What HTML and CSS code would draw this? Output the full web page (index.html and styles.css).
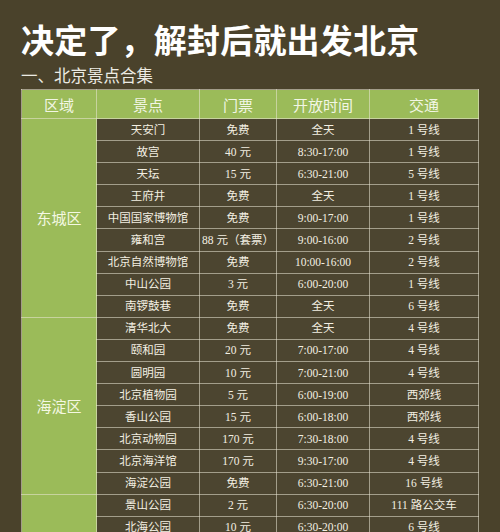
FILE: index.html
```html
<!DOCTYPE html>
<html lang="zh-CN">
<head>
<meta charset="utf-8">
<title>决定了，解封后就出发北京</title>
<link rel="stylesheet" href="styles.css">
</head>
<body>
<div class="page">
  <h1 class="title">决定了，解封后就出发北京</h1>
  <h2 class="subtitle">一、北京景点合集</h2>
  <table class="spots">
    <colgroup>
      <col class="c-area"><col class="c-spot"><col class="c-ticket"><col class="c-time"><col class="c-traffic">
    </colgroup>
    <thead>
      <tr><th>区域</th><th>景点</th><th>门票</th><th>开放时间</th><th>交通</th></tr>
    </thead>
    <tbody>
      <tr><td class="area" rowspan="9">东城区</td><td>天安门</td><td>免费</td><td>全天</td><td>1 号线</td></tr>
      <tr><td>故宫</td><td>40 元</td><td>8:30-17:00</td><td>1 号线</td></tr>
      <tr><td>天坛</td><td>15 元</td><td>6:30-21:00</td><td>5 号线</td></tr>
      <tr><td>王府井</td><td>免费</td><td>全天</td><td>1 号线</td></tr>
      <tr><td>中国国家博物馆</td><td>免费</td><td>9:00-17:00</td><td>1 号线</td></tr>
      <tr><td>雍和宫</td><td>88 元（套票）</td><td>9:00-16:00</td><td>2 号线</td></tr>
      <tr><td>北京自然博物馆</td><td>免费</td><td>10:00-16:00</td><td>2 号线</td></tr>
      <tr><td>中山公园</td><td>3 元</td><td>6:00-20:00</td><td>1 号线</td></tr>
      <tr><td>南锣鼓巷</td><td>免费</td><td>全天</td><td>6 号线</td></tr>
      <tr><td class="area" rowspan="8">海淀区</td><td>清华北大</td><td>免费</td><td>全天</td><td>4 号线</td></tr>
      <tr><td>颐和园</td><td>20 元</td><td>7:00-17:00</td><td>4 号线</td></tr>
      <tr><td>圆明园</td><td>10 元</td><td>7:00-21:00</td><td>4 号线</td></tr>
      <tr><td>北京植物园</td><td>5 元</td><td>6:00-19:00</td><td>西郊线</td></tr>
      <tr><td>香山公园</td><td>15 元</td><td>6:00-18:00</td><td>西郊线</td></tr>
      <tr><td>北京动物园</td><td>170 元</td><td>7:30-18:00</td><td>4 号线</td></tr>
      <tr><td>北京海洋馆</td><td>170 元</td><td>9:30-17:00</td><td>4 号线</td></tr>
      <tr><td>海淀公园</td><td>免费</td><td>6:30-21:00</td><td>16 号线</td></tr>
      <tr><td class="area" rowspan="2"></td><td>景山公园</td><td>2 元</td><td>6:30-20:00</td><td>111 路公交车</td></tr>
      <tr><td>北海公园</td><td>10 元</td><td>6:30-20:00</td><td>6 号线</td></tr>
    </tbody>
  </table>
</div>
</body>
</html>
```
FILE: styles.css
```css
html, body {
  margin: 0;
  padding: 0;
  overflow: hidden;
  background: #4a422b;
}

.page {
  padding: 22px 0 0 21px;
  font-family: "Noto Sans CJK SC", "Noto Sans", sans-serif;
}

.title {
  margin: 0;
  font-size: 33px;
  line-height: 34px;
  font-weight: bold;
  color: #ffffff;
  letter-spacing: 0.2px;
}

.subtitle {
  margin: 10px 0 0 0;
  font-size: 16.5px;
  line-height: 18px;
  font-weight: normal;
  color: #ecebe3;
}

.spots {
  margin-top: 5px;
  width: 457px;
  border-collapse: collapse;
  table-layout: fixed;
}

.c-area { width: 75px; }
.c-spot { width: 103px; }
.c-ticket { width: 77px; }
.c-time { width: 93px; }
.c-traffic { width: 109px; }

.spots th,
.spots td {
  border: 1px solid rgba(235, 232, 215, 0.55);
  padding: 0;
  text-align: center;
  vertical-align: middle;
}

.spots th {
  height: 28px;
  background: #9bbb59;
  color: #f2f6e4;
  font-size: 15px;
  font-weight: normal;
}

.spots td {
  height: 21.1px;
  background: #4c4530;
  color: #f3efe2;
  font-family: "Liberation Serif", "Noto Sans CJK SC", serif;
  font-size: 11.5px;
  line-height: 14px;
}

.spots td.area {
  background: #9bbb59;
  color: #f4f8e2;
  font-family: "Noto Sans CJK SC", "Noto Sans", sans-serif;
  font-size: 15px;
}
```
